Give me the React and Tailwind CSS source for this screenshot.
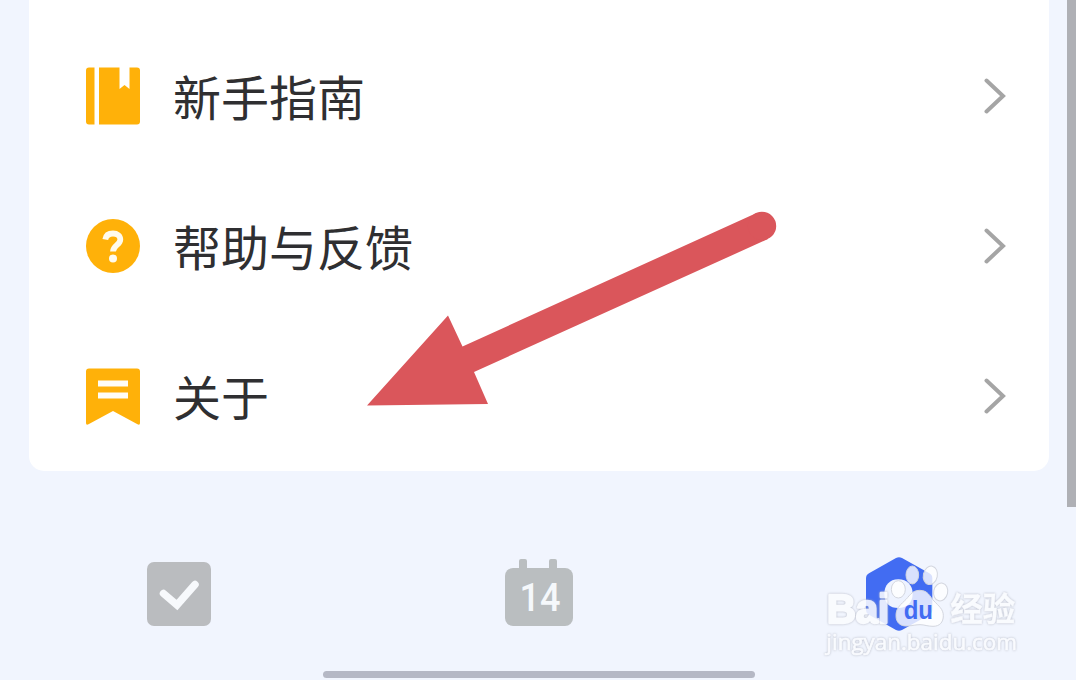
import React from "react";

const BookIcon = () => (
  <svg width="56" height="60" viewBox="0 0 56 60" fill="#ffb109">
    <path d="M4 1.500h5.500v57H4a3 3 0 0 1-3-3v-51a3 3 0 0 1 3-3z" />
    <path d="M14 1.500h20.500v21.500l5-4 5 4V1.500H52a3 3 0 0 1 3 3v51a3 3 0 0 1-3 3H14z" />
  </svg>
);

const HelpIcon = () => (
  <svg width="56" height="60" viewBox="0 0 56 60">
    <circle cx="28" cy="30" r="27" fill="#ffb109" />
    <path
      d="M20.300 23.500c.6-4.200 3.600-6 7.700-6 4.400 0 7.300 2.500 7.300 6 0 5.400-7.300 6-7.300 12"
      fill="none"
      stroke="#fffbee"
      strokeWidth="5.800"
    />
    <circle cx="28" cy="42.500" r="4" fill="#fffbee" />
  </svg>
);

const AboutIcon = () => (
  <svg width="56" height="60" viewBox="0 0 56 60">
    <path
      d="M4 2.500h48a3 3 0 0 1 3 3V57q0 2.500-2.500 1.300L28 45 3.500 58.300Q1 59.500 1 57V5.500a3 3 0 0 1 3-3z"
      fill="#ffb109"
    />
    <path d="M13 14.500h30v6H13zM13 26.500h30v6H13z" fill="#fffdf5" />
  </svg>
);

const Chevron = () => (
  <svg width="22" height="38" viewBox="0 0 22 38" className="mr-[43px]">
    <path
      d="M2.500 3.500l16.500 15.500-16.500 15.500"
      fill="none"
      stroke="#a5a5a5"
      strokeWidth="4"
      strokeLinecap="round"
    />
  </svg>
);

const menu = [
  { label: "新手指南", icon: <BookIcon /> },
  { label: "帮助与反馈", icon: <HelpIcon /> },
  { label: "关于", icon: <AboutIcon /> },
];

const MenuRow = ({ item }) => {
  return (
    <div className="flex h-[150px] w-full items-center pl-14">
      {item.icon}
      <div className="ml-8 flex-1 pb-[3px] text-5xl leading-none text-[#2f2f31]">
        {item.label}
      </div>
      <Chevron />
    </div>
  );
};

const CheckTab = () => (
  <svg width="64" height="64" viewBox="0 0 64 64" className="mt-[91px]">
    <rect width="64" height="64" rx="7" fill="#babcbf" />
    <path
      d="M16.500 31.500L30 43 48 22.500"
      fill="none"
      stroke="#f7f9fc"
      strokeWidth="7.500"
      strokeLinecap="round"
    />
  </svg>
);

const CalendarTab = () => (
  <svg width="68" height="68" viewBox="0 0 68 68" className="mt-[87px] ml-[294px]">
    <path
      d="M14 3a2 2 0 0 1 2-2h4a2 2 0 0 1 2 2v7h-8zM44 3a2 2 0 0 1 2-2h4a2 2 0 0 1 2 2v7h-8z"
      fill="#babec0"
    />
    <rect y="10" width="68" height="58" rx="8" fill="#babec0" />
    <text
      x="35"
      y="52.500"
      textAnchor="middle"
      fontSize="39"
      fontWeight="500"
      fontFamily="Roboto, sans-serif"
      fill="#f5f8fb"
      textLength="41"
      lengthAdjust="spacingAndGlyphs"
    >
      14
    </text>
  </svg>
);

// profile tab with the brand mark on top of it
const ProfileTab = () => (
  <svg
    width="215"
    height="120"
    viewBox="0 0 645 360"
    className="mt-[74px] ml-[242px]"
  >
    <path
      d="M243 39q9-5 18 0l82 46q9 5 9 15v94q0 10-9 15l-82 46q-9 5-18 0l-81-46q-9-5-9-15V100q0-10 9-15z"
      fill="#426cf2"
    />
    <path
      d="M250 103c-27 0-42 19-42 43 0 28 16 43 42 43 25 0 43-16 43-43 0-25-17-43-43-43z"
      fill="#eef3ff"
    />
    <g fill="#fff" fillOpacity="0.8" stroke="#d3d6df" strokeWidth="3">
      <ellipse cx="292" cy="90" rx="19" ry="27" />
      <ellipse cx="346" cy="91" rx="21" ry="28" transform="rotate(12 346 91)" />
      <ellipse cx="250" cy="133" rx="21" ry="26" />
      <ellipse cx="377" cy="141" rx="21" ry="27" transform="rotate(12 377 141)" />
      <path d="M314 136c-25 0-32 20-46 32-15 14-25 24-25 44 0 22 14 32 34 31 17-1 25-4 38-4s23 5 39 5c20 0 31-12 31-32s-15-30-28-44c-13-13-17-32-43-32z" />
    </g>
    <g
      className="drop-shadow-[0_0_3px_#adb1be]"
      fill="#fbfcff"
      stroke="#fbfcff"
      opacity="0.88"
      strokeLinejoin="round"
    >
      <text
        x="35"
        y="234"
        fontSize="124"
        fontWeight="700"
        fontFamily="'Liberation Sans', sans-serif"
        strokeWidth="7"
        textLength="188"
        lengthAdjust="spacingAndGlyphs"
      >
        Bai
      </text>
      <text
        x="406"
        y="227"
        fontSize="99"
        fontWeight="700"
        fontFamily="'Noto Sans CJK SC', sans-serif"
        strokeWidth="1"
        textLength="195"
        lengthAdjust="spacingAndGlyphs"
      >
        经验
      </text>
      <text
        x="34"
        y="316"
        fontSize="66"
        fontFamily="'Open Sans', sans-serif"
        strokeWidth="2"
        textLength="572"
        lengthAdjust="spacingAndGlyphs"
      >
        jingyan.baidu.com
      </text>
    </g>
    <text
      x="266"
      y="223"
      fontSize="76"
      fontWeight="700"
      fontFamily="'Liberation Sans', sans-serif"
      fill="#426cf2"
      textLength="88"
      lengthAdjust="spacingAndGlyphs"
    >
      du
    </text>
  </svg>
);

const App = () => {
  return (
    <div className="relative flex h-[680px] w-[1076px] overflow-hidden bg-[#f1f5fe] font-['Noto_Sans_CJK_SC',sans-serif]">
      <div className="flex w-[1067px] shrink-0 flex-col">
        <div className="ml-[29px] h-[471px] w-[1020px] rounded-b-[15px] bg-white pt-[21px]">
          {menu.map((item) => (
            <MenuRow key={item.label} item={item} />
          ))}
        </div>
        <div className="flex h-[200px] items-start pl-[147px]">
          <CheckTab />
          <CalendarTab />
          <ProfileTab />
        </div>
        <div className="ml-[323px] h-[7px] w-[432px] rounded-full bg-[#b5b8c5]" />
      </div>
      <div className="h-[507px] w-[9px] bg-[#afb0b5]" />
      <svg
        width="420"
        height="206"
        viewBox="360 205 420 206"
        className="pointer-events-none absolute top-[205px] left-[360px]"
      >
        <path
          d="M367 405.500L448 315.500 462.500 346.500 756.500 213 768 239 474 372 488 404z"
          fill="#da565b"
        />
        <circle cx="762" cy="226" r="14.200" fill="#da565b" />
      </svg>
    </div>
  );
};

export default App;
